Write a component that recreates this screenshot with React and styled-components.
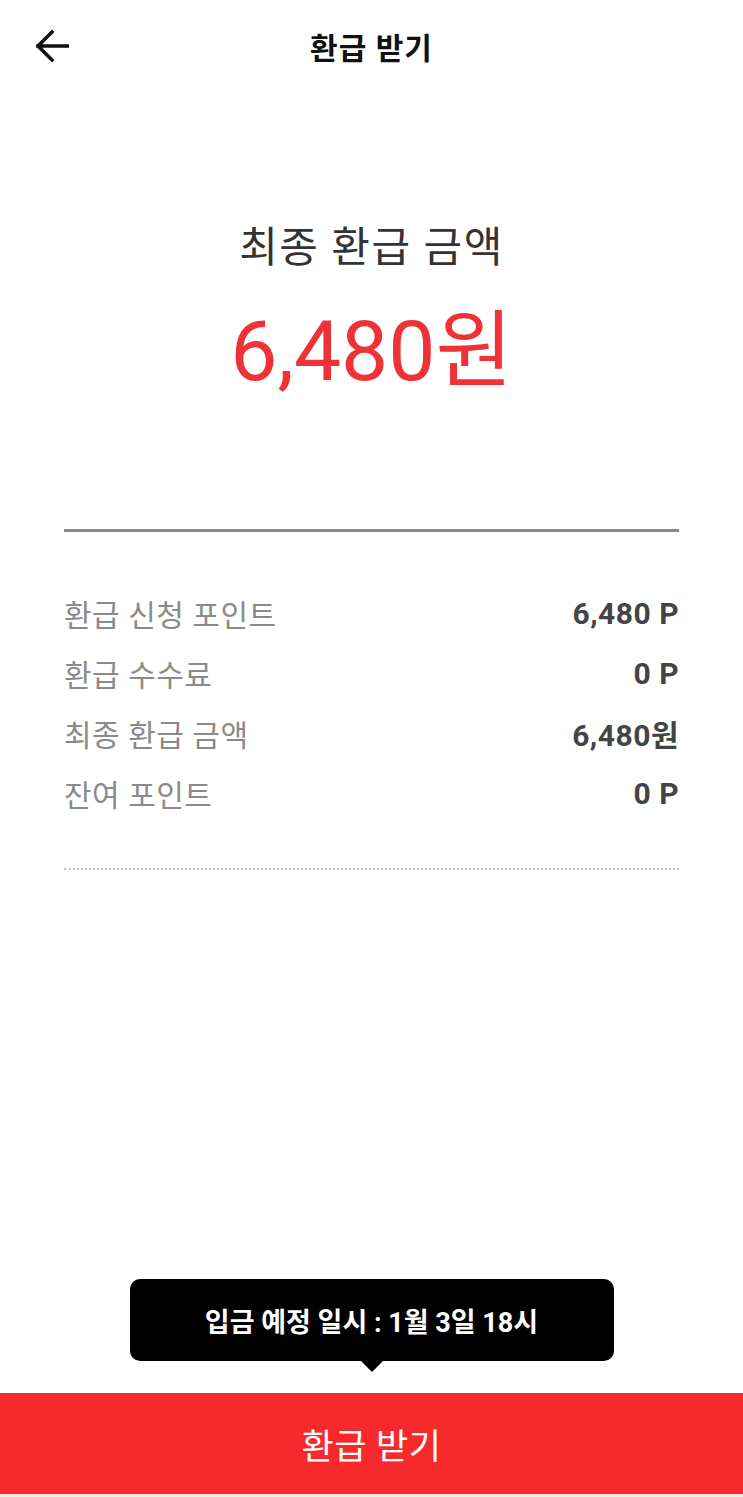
import React from 'react';
import styled, { createGlobalStyle } from 'styled-components';

const Global = createGlobalStyle`
  html, body {
    margin: 0;
    padding: 0;
    background: #ffffff;
  }
  body {
    font-family: Roboto, "Noto Sans CJK KR", "Noto Sans", sans-serif;
  }
`;

const Page = styled.div`
  display: flex;
  flex-direction: column;
  min-height: 100vh;
  width: 100%;
`;

const Header = styled.header`
  position: relative;
  height: 92px;
  display: flex;
  align-items: center;
  justify-content: center;
`;

const BackButton = styled.button`
  position: absolute;
  left: 30px;
  top: 24px;
  width: 44px;
  height: 44px;
  padding: 0;
  border: none;
  background: none;
  display: flex;
  align-items: center;
  justify-content: center;
`;

const Title = styled.h1`
  margin: 0;
  font-size: 30px;
  font-weight: 700;
  color: #111;
  letter-spacing: 1px;
`;

const Summary = styled.section`
  display: flex;
  flex-direction: column;
  align-items: center;
  padding-top: 131px;
`;

const SummaryLabel = styled.div`
  font-size: 42px;
  line-height: 50px;
  color: #333;
  font-weight: 400;
  letter-spacing: 1.5px;
`;

const Amount = styled.div`
  margin-top: 28px;
  font-size: 84px;
  line-height: 101px;
  color: #ee3236;
  font-weight: 400;
`;

const Details = styled.section`
  margin: 127px 64px 0;
  border-top: 3px solid #888;
  padding-top: 51px;
`;

const Row = styled.div`
  height: 60px;
  display: flex;
  align-items: center;
  justify-content: space-between;
`;

const RowLabel = styled.span`
  font-size: 30px;
  color: #8a8a8a;
  letter-spacing: 0.5px;
`;

const RowValue = styled.span`
  font-size: 30px;
  font-weight: 700;
  color: #444;
  letter-spacing: 0.5px;
`;

const Dotted = styled.hr`
  margin: 45px 0 0;
  border: none;
  border-top: 2px dotted #c4c4c4;
`;

const Spacer = styled.div`
  flex: 1;
`;

const Bottom = styled.div`
  display: flex;
  flex-direction: column;
  align-items: center;
`;

const Tooltip = styled.div`
  position: relative;
  width: 484px;
  height: 82px;
  margin-bottom: 32px;
  background: #000;
  border-radius: 10px;
  color: #fff;
  font-size: 27px;
  font-weight: 700;
  display: flex;
  align-items: center;
  justify-content: center;

  &::after {
    content: '';
    position: absolute;
    left: 50%;
    bottom: -11px;
    transform: translateX(-50%);
    border-left: 11px solid transparent;
    border-right: 11px solid transparent;
    border-top: 11px solid #000;
  }
`;

const SubmitButton = styled.button`
  width: 100%;
  height: 99px;
  border: none;
  border-bottom: 3px solid #ececec;
  background: #f8292c;
  color: #fff;
  font-family: inherit;
  font-size: 35px;
  font-weight: 400;
  box-sizing: content-box;
  letter-spacing: 0.5px;
`;

const rows = [
  { label: '환급 신청 포인트', value: '6,480 P' },
  { label: '환급 수수료', value: '0 P' },
  { label: '최종 환급 금액', value: '6,480원' },
  { label: '잔여 포인트', value: '0 P' },
];

export default function App() {
  return (
    <Page>
      <Global />
      <Header>
        <BackButton aria-label="back">
          <svg width="34" height="34" viewBox="0 0 34 34" fill="none">
            <path d="M33 17H3M17 3L3 17L17 31" stroke="#111" strokeWidth="3.6" strokeLinecap="square" />
          </svg>
        </BackButton>
        <Title>환급 받기</Title>
      </Header>

      <Summary>
        <SummaryLabel>최종 환급 금액</SummaryLabel>
        <Amount>6,480원</Amount>
      </Summary>

      <Details>
        {rows.map((r) => (
          <Row key={r.label}>
            <RowLabel>{r.label}</RowLabel>
            <RowValue>{r.value}</RowValue>
          </Row>
        ))}
        <Dotted />
      </Details>

      <Spacer />

      <Bottom>
        <Tooltip>입금 예정 일시 : 1월 3일 18시</Tooltip>
        <SubmitButton>환급 받기</SubmitButton>
      </Bottom>
    </Page>
  );
}
